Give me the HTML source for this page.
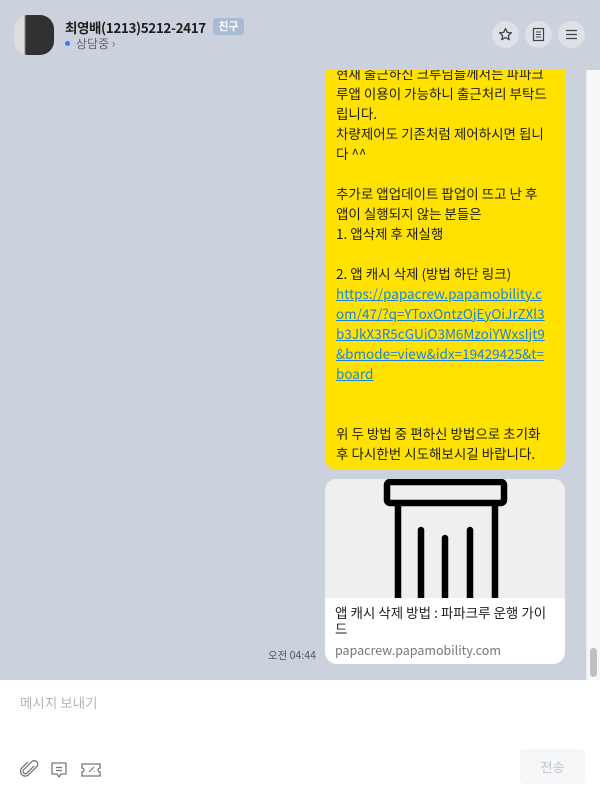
<!DOCTYPE html>
<html><head><meta charset="utf-8"><style>
*{margin:0;padding:0;box-sizing:border-box}
body{width:600px;height:800px;overflow:hidden;background:#fff;font-family:"Noto Sans CJK KR","Liberation Sans",sans-serif;position:relative}
.hdr{position:absolute;left:0;top:0;width:600px;height:70px;background:#cbd2de}
.chat{position:absolute;left:0;top:70px;width:586px;height:610px;background:#cbd2de;overflow:hidden}
.sb{position:absolute;left:586px;top:70px;width:14px;height:610px;background:#f7f7f7;border-left:1px solid #ececec}
.thumb{position:absolute;left:3px;top:578px;width:7px;height:29px;border-radius:4px;background:#c0c0c0}
.av{position:absolute;left:14px;top:15px;width:40px;height:40px;border-radius:14px;background:linear-gradient(90deg,#ddd 0,#ddd 25%,#333 30%,#2d312c 100%);overflow:hidden}
.name{position:absolute;left:65px;top:17px;font-size:13.5px;font-weight:bold;color:#1e1e1e;line-height:20px;letter-spacing:-0.4px}
.tag{position:absolute;left:213px;top:18px;width:31px;height:17px;background:#a9bad6;border-radius:3px;color:#fff;font-size:11px;font-weight:bold;text-align:center;line-height:17px}
.st{position:absolute;left:65px;top:36px;font-size:12px;color:#666;line-height:16px}
.st i{display:inline-block;width:5px;height:5px;border-radius:50%;background:#3a78f2;margin-right:6px;vertical-align:2px}
.btn{position:absolute;top:21px;width:27px;height:27px;border-radius:50%;background:#dde1e8}
.btn svg{position:absolute;left:6px;top:6px}
.bub{position:absolute;left:325px;top:-7px;width:240px;height:407px;background:#ffe200;border-radius:0 0 12px 12px;padding:0 0 0 11px;font-size:13.5px;line-height:20px;color:#1d1d1d;white-space:pre-line}
.bub a{color:#1a84d8;text-decoration:underline}
.card{position:absolute;left:325px;top:409px;width:240px;height:185px;background:#fff;border-radius:12px;overflow:hidden}
.img{height:119px;background:#efefef;position:relative}
.ct{padding:6px 10px 0;font-size:13.5px;line-height:16px;color:#1e1e1e}
.cd{padding:4px 10px 0;font-size:12.5px;color:#777}
.time{position:absolute;left:268px;top:578px;font-size:10.5px;color:#555}
.ph{position:absolute;left:20px;top:692px;font-size:13.5px;color:#b5b5b5}
.send{position:absolute;left:520px;top:749px;width:65px;height:35px;border-radius:4px;background:#f5f6f8;color:#c3c6ca;font-size:13px;text-align:center;line-height:35px}
</style></head><body>
<div class="hdr">
<div class="av"></div>
<div class="name">최영배(1213)5212-2417</div>
<div class="tag">친구</div>
<div class="st"><i></i>상담중 ›</div>
<div class="btn" style="left:492px"><svg width="15" height="15" viewBox="0 0 15 15"><path d="M7.5 1.5l1.8 3.9 4.1.4-3.1 2.8.9 4.1-3.7-2.2-3.7 2.2.9-4.1L1.6 5.8l4.1-.4z" fill="none" stroke="#444" stroke-width="1.3" stroke-linejoin="round"/></svg></div>
<div class="btn" style="left:525px"><svg width="15" height="15" viewBox="0 0 15 15"><rect x="2.5" y="1.5" width="10" height="12" fill="none" stroke="#444" stroke-width="1.2"/><path d="M5 5h5M5 7.5h5M5 10h5" stroke="#444" stroke-width="1.1"/></svg></div>
<div class="btn" style="left:558px"><svg width="15" height="15" viewBox="0 0 15 15"><path d="M2 3.5h11M2 7.5h11M2 11.5h11" stroke="#444" stroke-width="1.2"/></svg></div>
</div>
<div class="chat">
<div class="bub">현재 출근하신 크루님들께서는 파파크
루앱 이용이 가능하니 출근처리 부탁드
립니다.
차량제어도 기존처럼 제어하시면 됩니
다 ^^

추가로 앱업데이트 팝업이 뜨고 난 후
앱이 실행되지 않는 분들은
1. 앱삭제 후 재실행

2. 앱 캐시 삭제 (방법 하단 링크)
<a>https://papacrew.papamobility.c
om/47/?q=YToxOntzOjEyOiJrZXl3
b3JkX3R5cGUiO3M6MzoiYWxsIjt9
&amp;bmode=view&amp;idx=19429425&amp;t=
board</a>


위 두 방법 중 편하신 방법으로 초기화
후 다시한번 시도해보시길 바랍니다.</div>
<div class="card"><div class="img"><svg width="240" height="119" style="position:absolute;left:0;top:0"><rect x="62" y="3" width="117" height="21" rx="3" fill="none" stroke="#000" stroke-width="6.5"/><path d="M73 27V125M170 27V125" stroke="#000" stroke-width="6.5"/><path d="M96 51V125M120 59V118M145 51V125" stroke="#000" stroke-width="6.5" stroke-linecap="round"/></svg></div>
<div class="ct">앱 캐시 삭제 방법 : 파파크루 운행 가이<br>드</div>
<div class="cd">papacrew.papamobility.com</div></div>
<div class="time">오전 04:44</div>
</div>
<div class="sb"><div class="thumb"></div></div>
<div class="ph">메시지 보내기</div>
<svg style="position:absolute;left:20px;top:760px" width="82" height="20" viewBox="0 0 82 20"><path d="M14 6l-7 7a2.3 2.3 0 0 1-3.3-3.3l8-8a3.5 3.5 0 0 1 5 5l-8 8a4.8 4.8 0 0 1-6.8-6.8l6-6" fill="none" stroke="#777" stroke-width="1.3"/><path d="M32 3h14v11h-5l-2 3-2-3h-5z" fill="none" stroke="#777" stroke-width="1.3" stroke-linejoin="round"/><path d="M36 7.5h6M36 10.5h6" stroke="#777" stroke-width="1.2"/><path d="M62 4h18v4a2 2 0 0 0 0 4v4H62v-4a2 2 0 0 0 0-4z" fill="none" stroke="#777" stroke-width="1.3"/><path d="M69 12l5-5M69 8h.5M74 11.5h.5" stroke="#777" stroke-width="1.2"/></svg>
<div class="send">전송</div>
</body></html>
